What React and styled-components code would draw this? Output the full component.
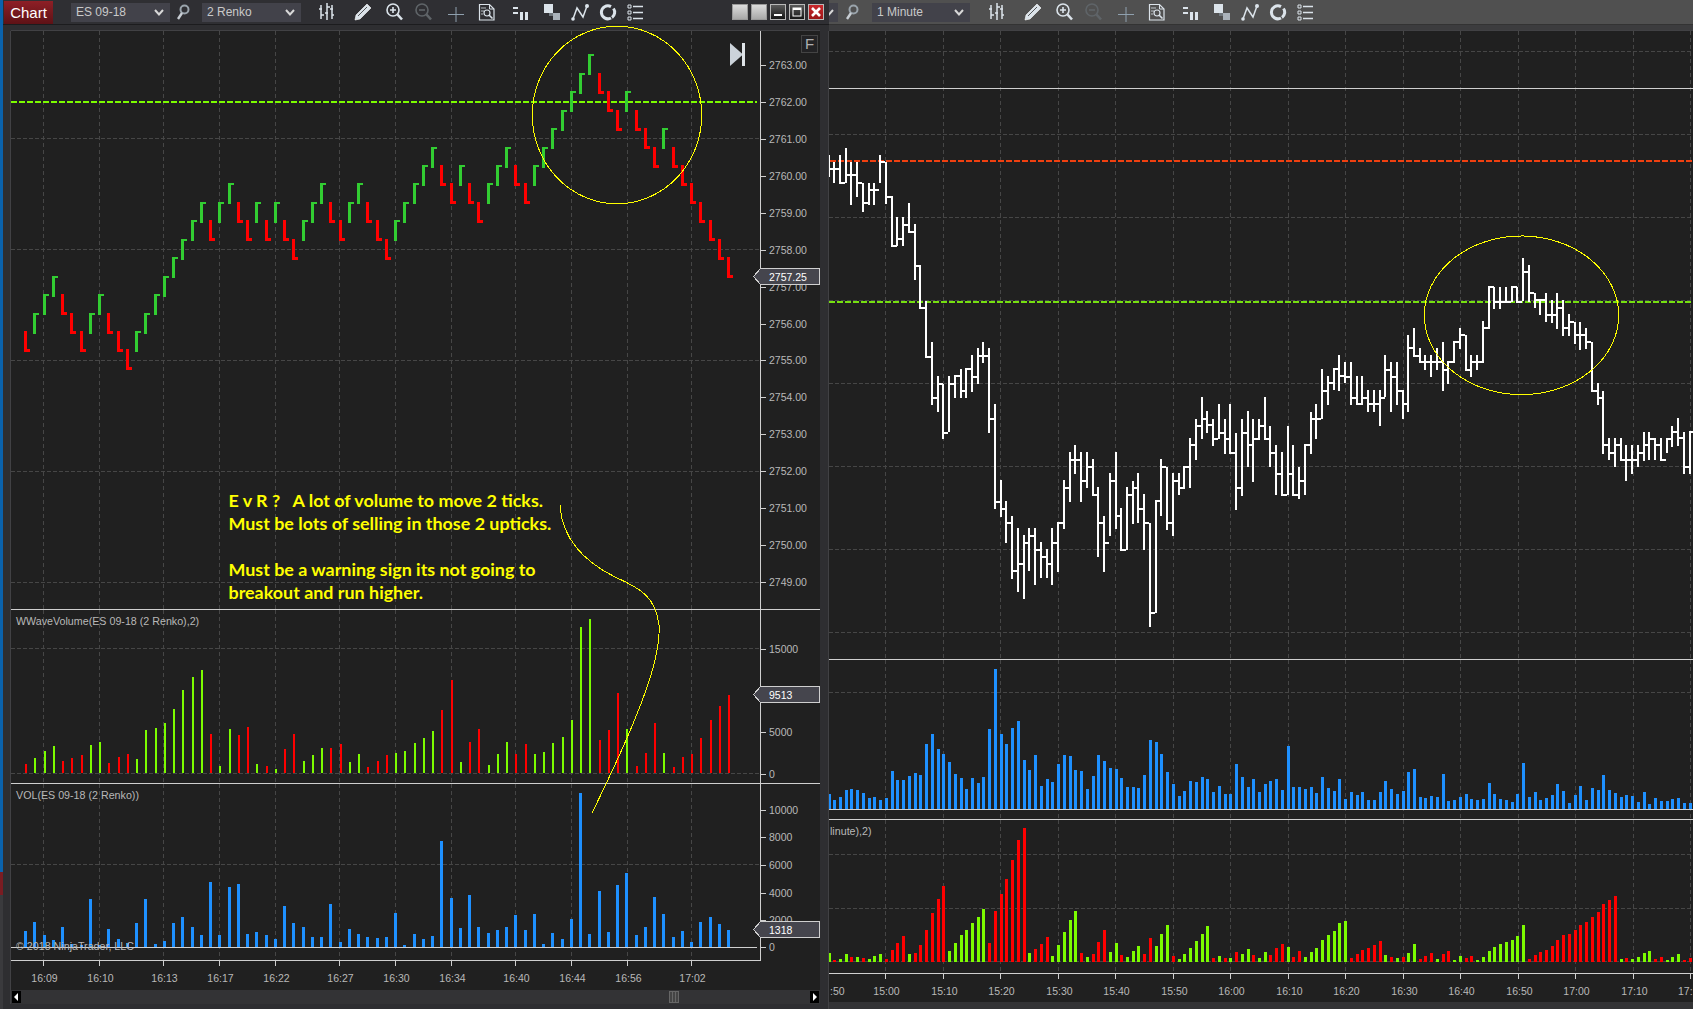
import React from "react"
import styled, { createGlobalStyle } from "styled-components"

const GlobalStyle = createGlobalStyle`
  html, body { margin: 0; padding: 0; background: #2b2b2e; }
  body { width: 1693px; height: 1009px; overflow: hidden; font-family: "Liberation Sans", Arial, sans-serif; }
`

const GRID = "#464646"
const AXIS = "#cfcfcf"
const LIME = "#7cfc00"
const RED = "#ff0000"
const BLUE = "#1e90ff"
const PEN = "#ffff00"

// left chart data, read off the picture
const RENKO = "r0 g1 g2 g3 r2 r1 r0 g1 g2 r1 r0 r-1 g0 g1 g2 g3 g4 g5 g6 g7 r6 g7 g8 r7 r6 g7 r6 g7 r6 r5 g6 g7 g8 r7 r6 g7 g8 r7 r6 r5 g6 g7 g8 g9 g10 r9 r8 g9 r8 r7 g8 g9 g10 r9 r8 g9 g10 g11 g12 g13 g14 g15 r14 r13 r12 g13 r12 r11 r10 g11 r10 r9 r8 r7 r6 r5 r4".split(" ")
const WAVE = "r492 g474 g453 g438 r483 r474 r465 g435 g426 r489 r471 r462 g477 g390 g384 g369 g327 g270 g231 g210 r402 g498 g387 r405 r381 g492 r498 g507 r447 r402 g483 g465 g444 r444 r432 g486 g462 r501 r483 r465 g459 g453 g429 g414 g393 r330 r240 g486 r426 r387 g495 g462 g426 r462 r432 g462 g456 g429 g411 g360 g81 g57 r420 r390 r279 g387 r498 r459 r369 g459 r501 r471 r462 r414 r360 r318 r285".split(" ")
const VOL = [993,966,1005,1020,981,1032,1034,897,1036,987,1017,1030,969,897,1032,1023,969,951,981,1005,846,1005,861,852,1002,996,1005,1017,918,969,981,1011,1011,912,1026,987,1002,1011,1014,1011,939,1035,1002,1017,1008,723,894,984,885,981,999,990,981,945,990,942,1032,999,1017,957,579,1002,873,996,855,819,1005,981,891,942,1011,993,1026,966,951,972,990]
const LEFT_TIMES = [["16:09",43.5],["16:10",99.5],["16:13",163.5],["16:17",219.5],["16:22",275.5],["16:27",339.5],["16:30",395.5],["16:34",451.5],["16:40",515.5],["16:44",571.5],["16:56",627.5],["17:02",691.5]]

// right chart data: [high, low, close tick] in crop coordinates
const OHLC_A = [[45,110,87],[66,130,87],[45,130,130],[24,130,105],[66,194,105],[66,172,128],[128,214,190],[128,194,150],[128,194,150],[45,130,66],[66,193,170],[169,318,318],[232,318,297],[232,318,255],[190,276,276],[253,420,378],[376,505,505],[482,650,650],[607,796,775],[709,818,732],[732,898,878],[709,878,732],[709,776,709],[688,776,754],[688,776,688],[645,755,710],[625,733,647],[607,670,648],[625,880,836],[793,1108,1085],[1020,1130,1107],[1084,1210,1148],[1127,1316,1292],[1165,1357,1272],[1186,1378,1209],[1165,1294,1188],[1165,1336,1230],[1207,1315,1250],[1228,1315,1272],[1165,1336,1209],[1148,1294,1148],[1020,1168,1043],[937,1088,960],[916,1004,960],[937,1088,1022],[937,1045,980],[958,1066,1066],[1042,1252,1150],[1127,1294,1209],[1000,1190,1022],[937,1168,1127],[1105,1230,1230],[1042,1230,1066],[1022,1150,1043],[1000,1150,1107],[1063,1230,1148],[1148,1460,1418],[1084,1420,1084],[958,1130,980],[980,1168,1150],[1000,1190,1022],[1000,1066,1043],[980,1045,980],[895,1045,916],[836,960,858],[772,898,836],[814,880,856],[836,918,898],[793,898,878],[836,940,898],[793,940,940],[878,1108,1043],[836,1066,878],[814,983,916],[836,1024,898],[836,898,858]]
const OHLC_B = [[532,658,658],[618,742,700],[676,825,763],[697,825,825],[618,825,763],[676,825,825],[740,835,784],[676,825,676],[575,700,596],[553,658,596],[448,597,512],[468,556,490],[448,512,448],[406,514,468],[427,490,470],[427,556,533],[468,556,553],[468,556,533],[511,577,553],[511,577,553],[511,620,533],[406,533,450],[427,577,470],[427,556,512],[511,598,553],[345,577,385],[325,408,408],[385,430,427],[406,450,427],[406,472,427],[385,450,427],[366,514,450],[427,493,427],[366,430,366],[325,387,345],[345,450,450],[406,472,427],[406,450,427],[304,430,325],[200,325,200],[200,265,245],[200,265,245],[200,245,245],[200,245,200],[200,245,245],[115,245,157],[135,245,220],[220,265,240],[240,285,240],[220,308,285],[240,308,285],[220,328,264],[240,348,324],[283,350,306],[305,370,346],[305,388,346],[325,388,366],[366,515,512],[490,556,533],[512,700,676],[655,722,700],[655,742,676],[655,720,720],[676,784,720],[676,763,720],[676,742,700],[636,722,676],[636,720,658],[655,722,676],[655,720,720],[655,700,658],[618,680,636],[595,680,655],[636,763,742],[636,763,636]]
const RIGHT_VOL = [432,450,441,420,417,420,429,444,441,450,444,363,390,390,378,369,375,282,252,297,312,336,372,384,417,384,399,381,237,57,252,282,234,213,330,360,315,408,387,396,342,315,318,360,363,417,378,315,333,354,357,384,411,411,414,375,270,276,312,366,402,438,423,393,396,381,387,426,408,432,432,342,381,411,387,426,402,393,387,420,288,411,411,417,411,429,381,414,423,387,447,426,435,426,450,450,426,393,417,432,423,366,357,441,444,438,441,372,453,450,441,432,447,450,447,399,432,447,450,456,432,339,441,426,450,444,435,402,423,459,435,408,450,414,420,375,420,429,441,435,438,456,426,462,444,453,453,447,444,459,459]
const RIGHT_WAVE = "g909 r930 g927 g912 r921 g921 r924 g927 g918 g912 r927 r900 r879 r858 g912 r909 r885 r840 r789 r747 r708 g903 g879 g855 g840 g819 g801 g777 r879 r783 r732 r687 r630 r570 r534 g909 r897 r882 r861 g918 g885 g846 g810 g783 r909 g921 r912 r876 r840 g906 g879 r915 g921 g903 g888 r912 r864 g888 g852 g825 r918 g927 g912 g894 g873 g852 g828 r924 g918 r924 g924 r906 g912 g897 r915 g924 g906 r915 r894 r882 g891 r921 r903 g921 g906 g894 g870 g855 g843 g819 g813 r924 r912 r900 r894 r885 r873 g915 r921 g924 r921 g909 g882 r927 r918 r909 g927 r912 r903 g930 g918 r924 r918 g930 g921 g903 g891 g882 g876 g870 g858 g825 r927 r915 r906 r900 r888 r870 r855 r852 r840 r825 r816 r801 r786 r762 r750 r738 g927 r924 g927 g921 g909 g903 r927 r921 g930 g921 g912 r930 r924".split(" ")
// the first and last labels are cut by the window in the picture, so they are only what shows
const RIGHT_TIMES = [":50","15:00","15:10","15:20","15:30","15:40","15:50","16:00","16:10","16:20","16:30","16:40","16:50","17:00","17:10","17:"]

const LEFT_GRID = LEFT_TIMES.map((t) => t[1])
const RIGHT_GRID = RIGHT_TIMES.map((t, i) => Math.round(828 + 57.47 * i) + 0.5)

const leftX = (i) => Math.round(25 + 9.25 * i)
const rightX = (i) => Math.round(828.5 + 5.74 * i)

const range = (n, f) => Array.from({ length: n }, (_, i) => f(i))

const Page = styled.div`
  display: flex;
  width: 1693px;
  height: 1009px;
  overflow: hidden;
  background: #2b2b2e;
`

const DesktopEdge = styled.div`
  width: 3px;
  flex: none;
  background: linear-gradient(#0a62ad 0, #0a62ad 872px, #7a1c22 872px, #7a1c22 895px, #3a3a3d 895px);
`

const Window = styled.div`
  position: relative;
  display: flex;
  flex-direction: column;
  flex: none;
  width: ${(p) => p.$width}px;
  height: 1009px;
  background: #2e2e31;
`

const Toolbar = styled.div`
  display: flex;
  align-items: center;
  flex: none;
  height: 24px;
  background: ${(p) => (p.$dim ? "#505050" : "#2f2f33")};
  border-bottom: 1px solid ${(p) => (p.$dim ? "#333" : "#1c1c1e")};
  box-sizing: content-box;
`

const TopGap = styled.div`
  flex: none;
  height: 6px;
  background: ${(p) => (p.$dim ? "#3c3c3e" : "#2e2e31")};
`

const ChartTab = styled.div`
  flex: none;
  width: 49px;
  height: 23px;
  margin: 1px 18px 0 1px;
  background: linear-gradient(#8e1f26, #5e1216);
  color: #fff;
  font-size: 15px;
  line-height: 23px;
  text-align: center;
`

const Select = styled.div`
  display: flex;
  align-items: center;
  justify-content: space-between;
  flex: none;
  box-sizing: border-box;
  width: ${(p) => p.$width}px;
  height: 19px;
  padding: 0 6px 0 5px;
  background: #42424a;
  color: #c9c9c9;
  font-size: 12px;
`

const ClippedSelect = styled.div`
  display: flex;
  align-items: center;
  flex: none;
  width: 9px;
  height: 19px;
  overflow: hidden;
  background: #42424a;
`

const SearchSlot = styled.div`
  display: flex;
  align-items: center;
  justify-content: center;
  flex: none;
  box-sizing: border-box;
  width: ${(p) => p.$width}px;
  padding-right: 6px;
`

const IconRow = styled.div`
  display: flex;
  align-items: center;
  flex: none;
  margin-left: ${(p) => p.$left}px;
`

const ToolIcon = styled.svg`
  display: block;
  flex: none;
  width: 22px;
  height: 22px;
  margin-left: ${(p) => p.$gap || 0}px;
  color: ${(p) => p.$color || "#dbe3ea"};
`

const WindowButtons = styled.div`
  display: flex;
  gap: 3px;
  margin-left: auto;
  margin-right: 5px;
`

const WinButton = styled.div`
  display: flex;
  align-items: center;
  justify-content: center;
  width: 16px;
  height: 16px;
  box-sizing: border-box;
  border: 1px solid ${(p) => (p.$kind === "plain" ? "#9a9a9a" : "#b8b8b8")};
  background: ${(p) =>
    p.$kind === "plain"
      ? "linear-gradient(#dcdcdc, #a8a8a8)"
      : p.$kind === "close"
      ? "linear-gradient(#c9282c, #9c1618)"
      : "linear-gradient(#5a5a5a, #161616)"};
`

const ChartArea = styled.div`
  display: flex;
  flex-direction: column;
  flex: none;
  margin-left: ${(p) => p.$left}px;
  width: ${(p) => p.$width}px;
  background: #202020;
  box-shadow: 0 -1px 0 #414144, -1px 0 0 #414144;
`

const Pane = styled.div`
  position: relative;
  flex: none;
  height: ${(p) => p.$height}px;
  border-bottom: ${(p) => (p.$rule ? `1px solid ${AXIS}` : "none")};
  box-sizing: content-box;
`

const ChartSvg = styled.svg`
  display: block;
  shape-rendering: crispEdges;
  text {
    font-family: "Liberation Sans", Arial, sans-serif;
    font-size: 10.5px;
    fill: #b9b9b9;
    shape-rendering: auto;
  }
  text.live {
    fill: #fff;
  }
`

const Legend = styled.div`
  position: absolute;
  left: ${(p) => p.$left}px;
  top: ${(p) => p.$top}px;
  color: #b8b8b8;
  font-size: 10.7px;
  line-height: 13px;
  white-space: nowrap;
`

const FButton = styled.div`
  position: absolute;
  right: 2px;
  top: 4px;
  width: 17px;
  height: 18px;
  box-sizing: border-box;
  border: 1px solid #444;
  background: #232325;
  color: #b0b0b0;
  font-size: 15px;
  line-height: 16px;
  text-align: center;
`

const Scrollbar = styled.div`
  display: flex;
  align-items: center;
  justify-content: space-between;
  flex: none;
  height: ${(p) => p.$height}px;
  padding: 0 1px;
  background: #333335;
  position: relative;
`

const ScrollArrow = styled.div`
  display: flex;
  align-items: center;
  justify-content: center;
  width: 9px;
  height: 12px;
  background: #000;
`

const ScrollThumb = styled.div`
  position: absolute;
  left: 658px;
  top: 1px;
  width: 10px;
  height: 12px;
  box-sizing: border-box;
  border: 1px solid #666;
  background: repeating-linear-gradient(90deg, #444 0 2px, #666 2px 3px);
`

const Overlay = styled.svg`
  position: absolute;
  left: 0;
  top: 0;
  pointer-events: none;
  shape-rendering: crispEdges;
`

const Note = styled.div`
  position: absolute;
  left: 225.5px;
  top: 489px;
  color: #ffff00;
  font-family: Lato, "Open Sans", sans-serif;
  font-weight: 700;
  font-size: 17.9px;
  line-height: 23px;
  white-space: pre;
`

/* ---- toolbar drawings ---- */

const Chevron = () => (
  <svg width="10" height="7" viewBox="0 0 10 7">
    <path d="M1 1 L5 5.5 L9 1" fill="none" stroke="#d8d8d8" strokeWidth="2" />
  </svg>
)

const Search = () => (
  <svg width="14" height="16" viewBox="0 0 14 16">
    <circle cx="8.5" cy="5.5" r="4" fill="none" stroke="#9aa4ac" strokeWidth="2" />
    <path d="M6 9 L2 15" stroke="#c8ced4" strokeWidth="2.4" />
  </svg>
)

const ICONS = [
  <>
    <path d="M5 4v14M11 2v17M16 4v14" stroke="currentColor" strokeWidth="1.5" />
    <path d="M3 8h3M5 14h3M9 12h3M11 6h3M14 8h3M16 14h2" stroke="currentColor" strokeWidth="1.4" />
  </>,
  <>
    <path d="M3 19 L4 14 L15 3 L19 7 L8 18 Z" fill="currentColor" stroke="#fff" strokeWidth="0.6" />
    <path d="M6 15 L15 6" stroke="#333" strokeWidth="0.8" />
  </>,
  <>
    <circle cx="10" cy="9" r="6" fill="none" stroke="currentColor" strokeWidth="1.6" />
    <path d="M7 9h6M10 6v6" stroke="currentColor" strokeWidth="1.6" />
    <path d="M14.5 13.5 L19 18.5" stroke="currentColor" strokeWidth="2.6" />
  </>,
  <>
    <circle cx="10" cy="9" r="6" fill="none" stroke="currentColor" strokeWidth="1.6" />
    <path d="M7 9h6" stroke="currentColor" strokeWidth="1.6" />
    <path d="M14.5 13.5 L19 18.5" stroke="currentColor" strokeWidth="2.6" />
  </>,
  <>
    <path d="M3 13.5h16M11 6v15" stroke="currentColor" strokeWidth="1" />
  </>,
  <>
    <path d="M3.5 3.5h10l4.500 4.500v11h-14.500z" fill="none" stroke="currentColor" strokeWidth="1.2" />
    <path d="M13.500 3.500v4.500h4.500" fill="none" stroke="currentColor" strokeWidth="1" />
    <circle cx="11" cy="12" r="3" fill="none" stroke="currentColor" strokeWidth="1.2" />
    <path d="M13 14 L16.500 17.500" stroke="currentColor" strokeWidth="1.6" />
    <path d="M5 7h5M5 10h3M5 13h2" stroke="currentColor" strokeWidth="0.8" />
  </>,
  <>
    <path d="M4 6h5v2h-5zM4 11h5v2h-5z" fill="currentColor" />
    <path d="M11 11h3v8h-3zM16 11h3v8h-3z" fill="currentColor" />
  </>,
  <>
    <rect x="3" y="3" width="9" height="9" fill="currentColor" />
    <rect x="12" y="12" width="7" height="7" fill="#aab2ba" />
    <rect x="8" y="12" width="4" height="3" fill="#71787e" />
  </>,
  <>
    <path d="M4 18 L8 7 L14 16 L18 5" fill="none" stroke="currentColor" strokeWidth="1.5" />
    <circle cx="4" cy="18" r="1.8" fill="currentColor" />
    <circle cx="18" cy="5" r="2" fill="currentColor" />
  </>,
  <>
    <path d="M14 5.600 A6.500 6.500 0 1 0 14 17 M16.500 7.500 A6.500 6.500 0 0 1 15 16.500" fill="none" stroke="currentColor" strokeWidth="3" />
  </>,
  <>
    <path d="M4 4h3v3h-3zM4 10h3v3h-3zM4 16h3v3h-3z" fill="none" stroke="currentColor" strokeWidth="1" />
    <path d="M9 5.500h10M9 11.500h10M9 17.500h10" stroke="currentColor" strokeWidth="1.6" />
  </>,
]

const ICON_GAPS = [0, 14, 9, 7, 11, 9, 11, 10, 6, 6, 5]

const Tools = ({ left }) => (
  <IconRow $left={left}>
    {ICONS.map((icon, i) => (
      <ToolIcon key={i} viewBox="0 0 22 22" $gap={ICON_GAPS[i]} $color={i === 3 ? "#5f6468" : i === 4 ? "#8fa0ae" : undefined}>
        {icon}
      </ToolIcon>
    ))}
  </IconRow>
)

/* ---- chart parts ---- */

const VGrid = ({ xs, y1, y2 }) =>
  xs.map((x) => <line key={x} x1={x} x2={x} y1={y1} y2={y2} stroke={GRID} strokeDasharray="4 3" />)

const HGrid = ({ ys, x1, x2 }) =>
  ys.map((y) => <line key={y} x1={x1} x2={x2} y1={y} y2={y} stroke={GRID} strokeDasharray="4 2" />)

const DashLine = ({ y, x1, x2, color }) => (
  <line x1={x1} x2={x2} y1={y} y2={y} stroke={color} strokeWidth="2" strokeDasharray="6 2" />
)

const AxisLabels = ({ items }) =>
  items.map(([label, y]) => (
    <g key={label}>
      <line x1="761" x2="766" y1={y + 0.5} y2={y + 0.5} stroke={AXIS} />
      <text x="769" y={y + 4}>{label}</text>
    </g>
  ))

const Marker = ({ y, value }) => (
  <g>
    <polygon
      points={`753.5,${y} 760.5,${y - 8} 819.5,${y - 8} 819.5,${y + 8} 760.5,${y + 8}`}
      fill="#45454d"
      stroke={AXIS}
    />
    <text className="live" x="769" y={y + 4}>{value}</text>
  </g>
)

const PaneSvg = ({ x0, y0, w, h, children }) => (
  <ChartSvg width={w} height={h} viewBox={`${x0} ${y0} ${w} ${h}`}>{children}</ChartSvg>
)

const Renko = () =>
  RENKO.map((bar, i) => {
    const up = bar[0] === "g"
    const top = Math.round(331 - 18.45 * Number(bar.slice(1)))
    const x = leftX(i) - 1
    const color = up ? "#32cd32" : RED
    return (
      <g key={i} fill={color}>
        <rect x={x} y={top} width="3" height="21" />
        {up ? <rect x={x} y={top} width="6" height="2" /> : <rect x={x} y={top + 18} width="6" height="3" />}
      </g>
    )
  })

const WaveBars = ({ data, xOf, width, zero, y0 }) =>
  data.map((bar, i) => {
    const top = Math.round(y0 + Number(bar.slice(1)) / 3)
    return (
      <rect key={i} x={xOf(i)} y={top} width={width} height={Math.max(1, zero - top)} fill={bar[0] === "g" ? LIME : RED} />
    )
  })

const OhlcBars = () => {
  const bars = [
    ...OHLC_A.map(([h, l, c]) => [140 + h / 3, 140 + l / 3, 140 + c / 3]),
    ...OHLC_B.map(([h, l, c]) => [220 + h / 3, 220 + l / 3, 220 + c / 3]),
  ]
  return bars.map(([h, l, c], i) => (
    <g key={i} fill="#fff">
      <rect x={rightX(i) - 1} y={Math.round(h)} width="2" height={Math.round(l - h)} />
      <rect x={rightX(i) - 1} y={Math.round(c) - 1} width="6" height="2" />
    </g>
  ))
}

/* ---- the two windows ---- */

const PRICE_LABELS = range(15, (i) => [`${2763 - i}.00`, Math.round(65 + 36.93 * i)])

const LeftWindow = () => (
  <Window $width={826}>
    <Toolbar>
      <ChartTab>Chart</ChartTab>
      <Select $width={99}>ES 09-18 <Chevron /></Select>
      <SearchSlot $width={32}><Search /></SearchSlot>
      <Select $width={99}>2 Renko <Chevron /></Select>
      <Tools left={15} />
      <WindowButtons>
        <WinButton $kind="plain" />
        <WinButton $kind="plain" />
        <WinButton>
          <svg width="10" height="10" viewBox="0 0 10 10"><rect x="1" y="7" width="8" height="2" fill="#fff" /></svg>
        </WinButton>
        <WinButton>
          <svg width="10" height="10" viewBox="0 0 10 10"><rect x="1" y="1" width="8" height="8" fill="none" stroke="#fff" /><rect x="1" y="1" width="8" height="2" fill="#fff" /></svg>
        </WinButton>
        <WinButton $kind="close">
          <svg width="10" height="10" viewBox="0 0 10 10"><path d="M1 1 L9 9 M9 1 L1 9" stroke="#fff" strokeWidth="2.6" /></svg>
        </WinButton>
      </WindowButtons>
    </Toolbar>
    <TopGap />
    <ChartArea $left={8} $width={809}>
      <Pane $height={578} $rule>
        <PaneSvg x0={11} y0={31} w={809} h={578}>
          <VGrid xs={LEFT_GRID} y1={31} y2={609} />
          <HGrid ys={[138.5, 249.5, 360.5, 471.5, 582.5]} x1={11} x2={760} />
          <line x1="760.5" x2="760.5" y1="31" y2="609" stroke={AXIS} />
          <AxisLabels items={PRICE_LABELS} />
          <DashLine y={102} x1={11} x2={757} color={LIME} />
          <Renko />
          <g shapeRendering="auto">
            <polygon points="730,43 730,66 743,54.500" fill="#ccd3da" />
            <rect x="742" y="43" width="3" height="23" fill="#dfe4e8" />
          </g>
          <Marker y={276.5} value="2757.25" />
        </PaneSvg>
        <FButton>F</FButton>
      </Pane>
      <Pane $height={173} $rule>
        <PaneSvg x0={11} y0={610} w={809} h={173}>
          <VGrid xs={LEFT_GRID} y1={610} y2={783} />
          <HGrid ys={[648.5, 773.5]} x1={11} x2={760} />
          <line x1="760.5" x2="760.5" y1="610" y2="783" stroke={AXIS} />
          <AxisLabels items={[["15000", 649], ["5000", 732], ["0", 774]]} />
          <WaveBars data={WAVE} xOf={leftX} width={2} zero={773} y0={600} />
          <Marker y={694.5} value="9513" />
        </PaneSvg>
        <Legend $left={5} $top={5}>WWaveVolume(ES 09-18 (2 Renko),2)</Legend>
      </Pane>
      <Pane $height={176}>
        <PaneSvg x0={11} y0={784} w={809} h={176}>
          <VGrid xs={LEFT_GRID} y1={784} y2={960} />
          <HGrid ys={[864.5]} x1={11} x2={760} />
          <line x1="760.5" x2="760.5" y1="784" y2="960" stroke={AXIS} />
          <AxisLabels items={[["10000", 810], ["8000", 837], ["6000", 865], ["4000", 893], ["2000", 920], ["0", 947]]} />
          {VOL.map((top, i) => (
            <rect key={i} x={leftX(i) - 1} y={Math.round(600 + top / 3)} width="3" height={947 - Math.round(600 + top / 3)} fill={BLUE} />
          ))}
          <line x1="11" x2="757" y1="947.5" y2="947.5" stroke={AXIS} />
          <Marker y={929.5} value="1318" />
        </PaneSvg>
        <Legend $left={5} $top={5}>VOL(ES 09-18 (2 Renko))</Legend>
        <Legend $left={5} $top={156}>© 2018 NinjaTrader, LLC</Legend>
      </Pane>
      <PaneSvg x0={11} y0={960} w={809} h={30}>
        <line x1="11" x2="761" y1="960.5" y2="960.5" stroke={AXIS} />
        {LEFT_TIMES.map(([label, x]) => (
          <g key={label}>
            <line x1={x} x2={x} y1="960" y2="966" stroke={AXIS} />
            <text x={x + 1} y="982" textAnchor="middle">{label}</text>
          </g>
        ))}
      </PaneSvg>
      <Scrollbar $height={14}>
        <ScrollArrow>
          <svg width="5" height="8" viewBox="0 0 5 8"><polygon points="4,0 4,8 0,4" fill="#fff" /></svg>
        </ScrollArrow>
        <ScrollThumb />
        <ScrollArrow>
          <svg width="5" height="8" viewBox="0 0 5 8"><polygon points="1,0 1,8 5,4" fill="#fff" /></svg>
        </ScrollArrow>
      </Scrollbar>
    </ChartArea>
    <Overlay width={826} height={1009} viewBox="3 0 826 1009">
      <ellipse cx="617" cy="115" rx="84.700" ry="88.800" fill="none" stroke={PEN} />
      <path
        d="M560 505 C562 540 585 562 615 577 C640 588 656 597 659 625 C661 655 645 705 592 813"
        fill="none"
        stroke={PEN}
      />
    </Overlay>
    <Note>{"E v R ?   A lot of volume to move 2 ticks.\nMust be lots of selling in those 2 upticks.\n\nMust be a warning sign its not going to\nbreakout and run higher."}</Note>
  </Window>
)

const RightWindow = () => (
  <Window $width={864}>
    <Toolbar $dim>
      <ClippedSelect>
        <svg width="5" height="7" viewBox="5 0 5 7">
          <path d="M1 1 L5 5.5 L9 1" fill="none" stroke="#d8d8d8" strokeWidth="2" />
        </svg>
      </ClippedSelect>
      <SearchSlot $width={34}><Search /></SearchSlot>
      <Select $width={98}>1 Minute <Chevron /></Select>
      <Tools left={16} />
    </Toolbar>
    <TopGap $dim />
    <ChartArea $left={0} $width={864}>
      <Pane $height={628} $rule>
        <PaneSvg x0={829} y0={31} w={864} h={628}>
          <VGrid xs={RIGHT_GRID} y1={31} y2={659} />
          <HGrid ys={[51.5, 134.5, 217.5, 300.5, 383.5, 466.5, 549.5, 632.5]} x1={829} x2={1693} />
          <line x1="829" x2="1693" y1="88.500" y2="88.500" stroke={AXIS} />
          <DashLine y={161} x1={830} x2={1693} color="#f04010" />
          <DashLine y={302} x1={829} x2={1693} color="#76e010" />
          <OhlcBars />
          <ellipse cx="1521.500" cy="315.300" rx="97.200" ry="79.300" fill="none" stroke={PEN} />
        </PaneSvg>
      </Pane>
      <Pane $height={159} $rule>
        <PaneSvg x0={829} y0={660} w={864} h={159}>
          <VGrid xs={RIGHT_GRID} y1={660} y2={819} />
          <HGrid ys={[692.5]} x1={829} x2={1693} />
          {RIGHT_VOL.map((top, i) => (
            <rect key={i} x={rightX(i) - 1} y={Math.round(650 + top / 3)} width="3" height={809 - Math.round(650 + top / 3)} fill={BLUE} />
          ))}
          <line x1="829" x2="1693" y1="809.500" y2="809.500" stroke={AXIS} />
        </PaneSvg>
      </Pane>
      <Pane $height={153}>
        <PaneSvg x0={829} y0={820} w={864} h={153}>
          <VGrid xs={RIGHT_GRID} y1={820} y2={973} />
          <HGrid ys={[854.5, 908.5, 961.5]} x1={829} x2={1693} />
          <WaveBars data={RIGHT_WAVE} xOf={(i) => rightX(i) - 1} width={3} zero={962} y0={650} />
        </PaneSvg>
        <Legend $left={1} $top={5}>linute),2)</Legend>
      </Pane>
      <PaneSvg x0={829} y0={973} w={864} h={29}>
        <line x1="829" x2="1693" y1="973.500" y2="973.500" stroke={AXIS} />
        {RIGHT_TIMES.map((label, i) => {
          const first = i === 0
          const last = i === RIGHT_TIMES.length - 1
          return (
            <g key={label}>
              <line x1={RIGHT_GRID[i]} x2={RIGHT_GRID[i]} y1="973" y2="979" stroke={AXIS} />
              <text
                x={first ? 830 : last ? 1678 : RIGHT_GRID[i] + 1}
                y="995"
                textAnchor="start"
                style={first || last ? undefined : { textAnchor: "middle" }}
              >
                {label}
              </text>
            </g>
          )
        })}
      </PaneSvg>
      <Scrollbar $height={7} />
    </ChartArea>
  </Window>
)

const App = () => (
  <Page>
    <GlobalStyle />
    <DesktopEdge />
    <LeftWindow />
    <RightWindow />
  </Page>
)

export default App
